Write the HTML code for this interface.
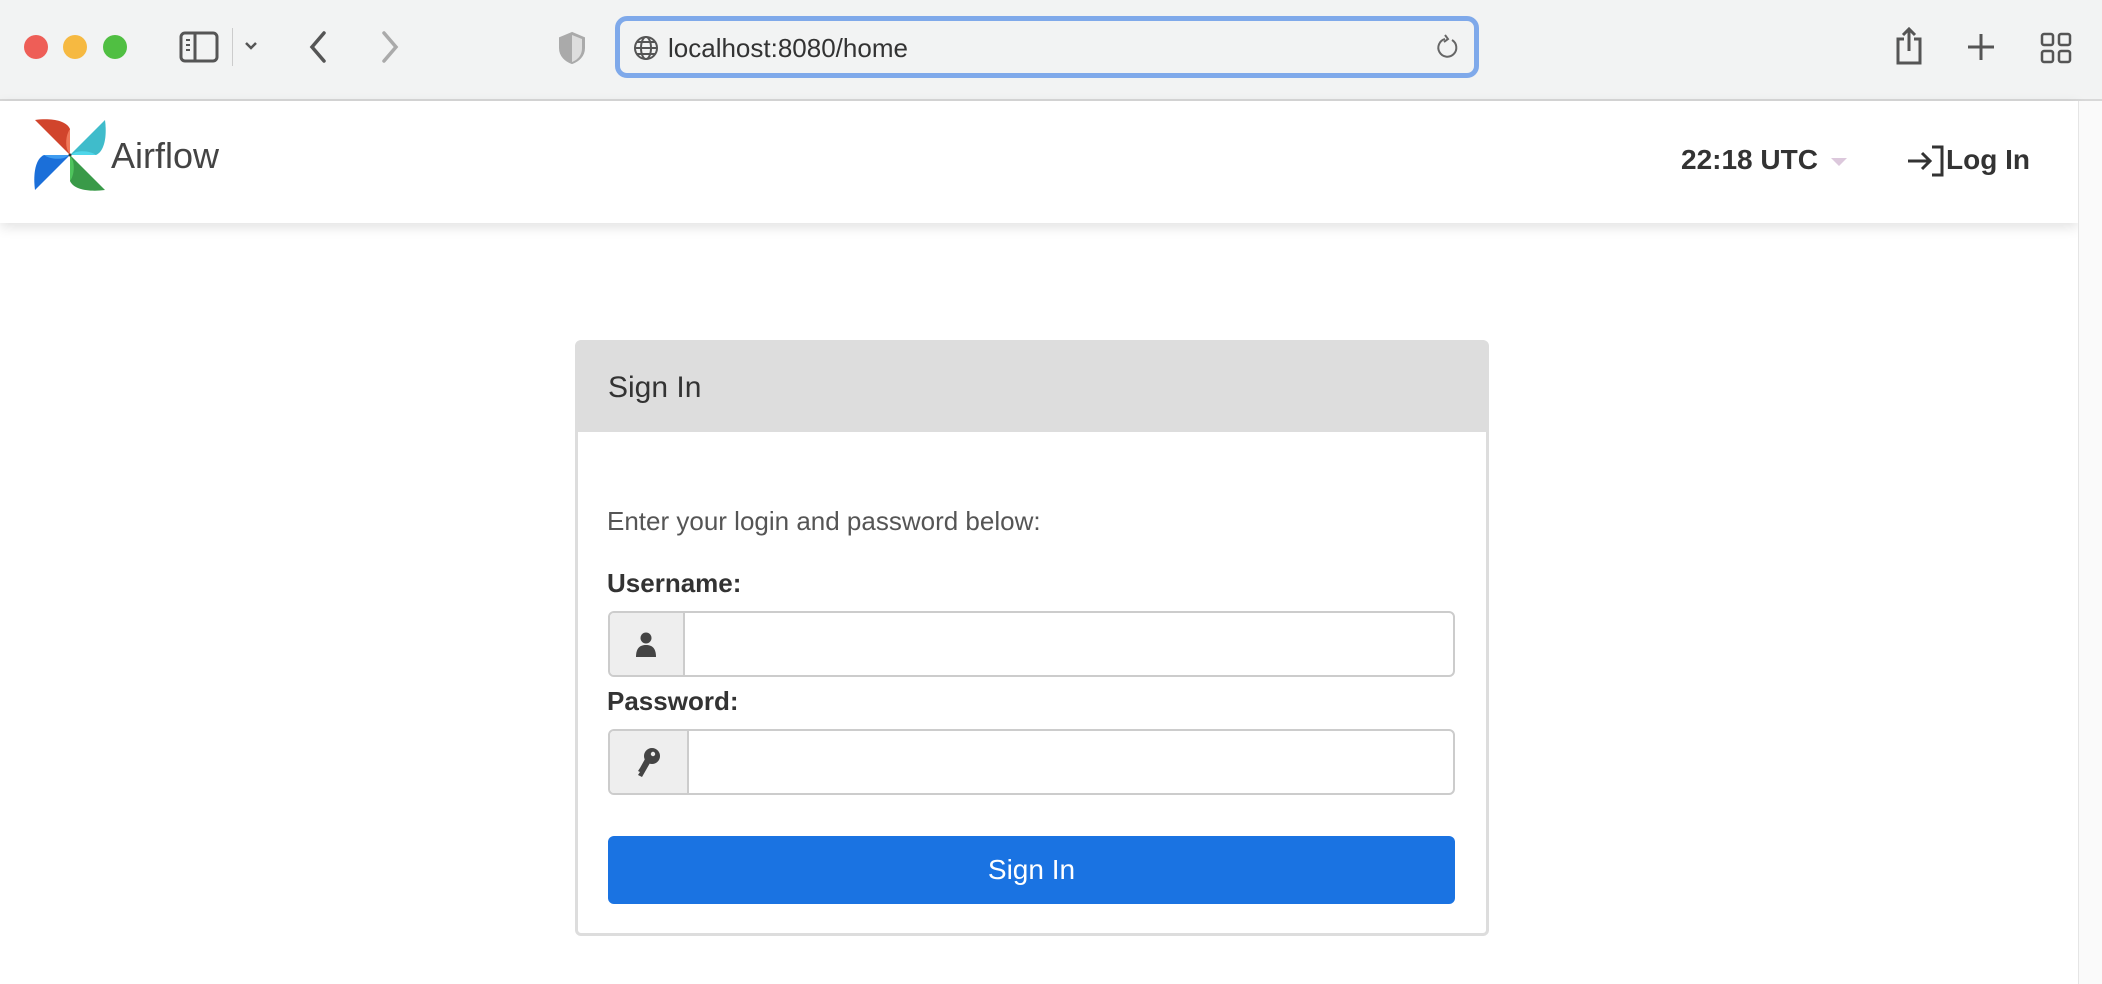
<!DOCTYPE html>
<html><head><meta charset="utf-8"><style>
*{margin:0;padding:0;box-sizing:border-box}
body{width:2102px;height:984px;overflow:hidden;background:#fff;font-family:"Liberation Sans",sans-serif;position:relative}
.tb{position:absolute;left:0;top:0;width:2102px;height:101px;background:#f2f3f3;border-bottom:2px solid #d8d8d8}
.dot{position:absolute;top:35px;width:24px;height:24px;border-radius:50%}
.url{position:absolute;left:615px;top:16px;width:864px;height:62px;border:5px solid #7fa9ea;border-radius:12px;background:#f2f3f3}
.url span{position:absolute;left:48px;top:12px;font-size:26px;color:#333}
.nav{position:absolute;left:0;top:101px;width:2078px;height:122px;background:#fff;box-shadow:0 4px 12px rgba(0,0,0,.12)}
.sb{position:absolute;left:2078px;top:101px;width:24px;height:883px;background:#fafafa;border-left:1px solid #e5e5e5}
.card{position:absolute;left:575px;top:340px;width:914px;height:596px;border:3px solid #ddd;border-radius:6px;background:#fff}
.ch{height:89px;background:#ddd;font-size:30px;color:#333;padding:28px 0 0 30px}
.lbl{position:absolute;left:29px;font-size:26px;font-weight:bold;color:#333}
.inp{position:absolute;left:30px;width:847px;height:66px;border:2px solid #ccc;border-radius:6px;background:#fff}
.add{position:absolute;left:0;top:0;bottom:0;background:#eee;border-right:2px solid #ccc;border-radius:4px 0 0 4px}
.btn{position:absolute;left:30px;top:493px;width:847px;height:68px;background:#1a73e2;border-radius:6px;color:#fff;font-size:28px;text-align:center;line-height:68px}
</style></head><body>
<div class="tb">
<div class="dot" style="left:24px;background:#ee5e57"></div>
<div class="dot" style="left:63px;background:#f6b941"></div>
<div class="dot" style="left:103px;background:#50bf42"></div>
<svg style="position:absolute;left:178px;top:30px" width="42" height="34" viewBox="0 0 42 34" fill="none" stroke="#555" stroke-width="3"><rect x="3" y="3" width="36" height="28" rx="4"/><line x1="17" y1="3" x2="17" y2="31"/><line x1="8" y1="10" x2="12" y2="10" stroke-width="2"/><line x1="8" y1="15" x2="12" y2="15" stroke-width="2"/><line x1="8" y1="20" x2="12" y2="20" stroke-width="2"/></svg>
<div style="position:absolute;left:232px;top:28px;width:1px;height:38px;background:#ccc"></div>
<svg style="position:absolute;left:243px;top:40px" width="16" height="12" viewBox="0 0 16 12" fill="none" stroke="#555" stroke-width="2.5"><path d="M3 3l5 5 5-5"/></svg>
<svg style="position:absolute;left:306px;top:30px" width="24" height="34" viewBox="0 0 24 34" fill="none" stroke="#555" stroke-width="3.5" stroke-linecap="round"><path d="M18 3L6 17l12 14"/></svg>
<svg style="position:absolute;left:378px;top:30px" width="24" height="34" viewBox="0 0 24 34" fill="none" stroke="#aaa" stroke-width="3.5" stroke-linecap="round"><path d="M6 3l12 14L6 31"/></svg>
<svg style="position:absolute;left:557px;top:31px" width="30" height="34" viewBox="0 0 30 34"><path d="M15 2L3 7v10c0 8 6 13 12 15 6-2 12-7 12-15V7z" fill="#aaa" stroke="#aaa" stroke-width="2"/><path d="M15 4v27c5-2 10-6 10-14V8z" fill="#ddd"/></svg>
<div class="url"><svg style="position:absolute;left:13px;top:14px" width="26" height="26" viewBox="0 0 26 26" fill="none" stroke="#555" stroke-width="2"><circle cx="13" cy="13" r="11"/><ellipse cx="13" cy="13" rx="5" ry="11"/><line x1="2" y1="13" x2="24" y2="13"/><line x1="4" y1="7" x2="22" y2="7"/><line x1="4" y1="19" x2="22" y2="19"/></svg><span>localhost:8080/home</span>
<svg style="position:absolute;right:14px;top:13px" width="24" height="28" viewBox="0 0 24 28" fill="none" stroke="#666" stroke-width="2"><path d="M16 6a9 9 0 1 1-7 -1"/><path d="M9 1l3 4-4 3"/></svg></div>
<svg style="position:absolute;left:1893px;top:26px" width="32" height="40" viewBox="0 0 32 40" fill="none" stroke="#555" stroke-width="3"><path d="M11 13H5v24h22V13h-6"/><path d="M16 25V3M10 9l6-6 6 6"/></svg>
<svg style="position:absolute;left:1966px;top:32px" width="30" height="30" viewBox="0 0 30 30" stroke="#555" stroke-width="3"><path d="M15 2v26M2 15h26"/></svg>
<svg style="position:absolute;left:2040px;top:32px" width="32" height="32" viewBox="0 0 32 32" fill="none" stroke="#555" stroke-width="2.5"><rect x="2" y="2" width="11" height="11" rx="2"/><rect x="19" y="2" width="11" height="11" rx="2"/><rect x="2" y="19" width="11" height="11" rx="2"/><rect x="19" y="19" width="11" height="11" rx="2"/></svg>
</div>
<div class="nav">
<svg style="position:absolute;left:34px;top:18px" width="72" height="72" viewBox="-36 -36 72 72">
<path d="M0 0L-35-35C-20-37-4-35 0-26Z" fill="#d1442c"/><path d="M0 0L0-26C-3-22-5-14-3-6Z" fill="#f0785a"/>
<g transform="rotate(90)"><path d="M0 0L-35-35C-20-37-4-35 0-26Z" fill="#3fbccb"/><path d="M0 0L0-26C-3-22-5-14-3-6Z" fill="#4fd7ea"/></g>
<g transform="rotate(180)"><path d="M0 0L-35-35C-20-37-4-35 0-26Z" fill="#399a48"/><path d="M0 0L0-26C-3-22-5-14-3-6Z" fill="#4ec45c"/></g>
<g transform="rotate(270)"><path d="M0 0L-35-35C-20-37-4-35 0-26Z" fill="#1b6fd9"/><path d="M0 0L0-26C-3-22-5-14-3-6Z" fill="#3f9cf0"/></g>
<circle r="1.5" fill="#333"/></svg>
<div style="position:absolute;left:111px;top:34px;font-size:36px;color:#444">Airflow</div>
<div style="position:absolute;left:1681px;top:43px;font-size:28px;font-weight:bold;color:#333">22:18 UTC</div>
<div style="position:absolute;left:1831px;top:57px;border-left:8px solid transparent;border-right:8px solid transparent;border-top:8px solid #dcc8dc"></div>
<svg style="position:absolute;left:1906px;top:44px" width="40" height="32" viewBox="0 0 40 32" fill="none" stroke="#333" stroke-width="3"><path d="M2 16h22M16 8l8 8-8 8"/><path d="M26 2h10v28H26"/></svg>
<div style="position:absolute;left:1946px;top:43px;font-size:28px;font-weight:bold;color:#333">Log In</div>
</div>
<div class="sb"></div>
<div class="card">
<div class="ch">Sign In</div>
<div style="position:absolute;left:29px;top:163px;font-size:26px;color:#555">Enter your login and password below:</div>
<div class="lbl" style="top:225px">Username:</div>
<div class="inp" style="top:268px"><div class="add" style="width:75px"><svg style="position:absolute;left:24px;top:18px" width="24" height="28" viewBox="0 0 24 28" fill="#444"><circle cx="12" cy="7" r="5.5"/><path d="M2 26c0-9 4-12 10-12s10 3 10 12z"/></svg></div></div>
<div class="lbl" style="top:343px">Password:</div>
<div class="inp" style="top:386px"><div class="add" style="width:79px"><svg style="position:absolute;left:25px;top:16px" width="28" height="32" viewBox="0 0 28 32" fill="#444"><circle cx="17" cy="9" r="8"/><path d="M10 12l5 4-8 14-4-2 2-3-2-1 2-3 z"/><circle cx="18" cy="7" r="2.2" fill="#eee"/></svg></div></div>
<div class="btn">Sign In</div>
</div>
</body></html>
